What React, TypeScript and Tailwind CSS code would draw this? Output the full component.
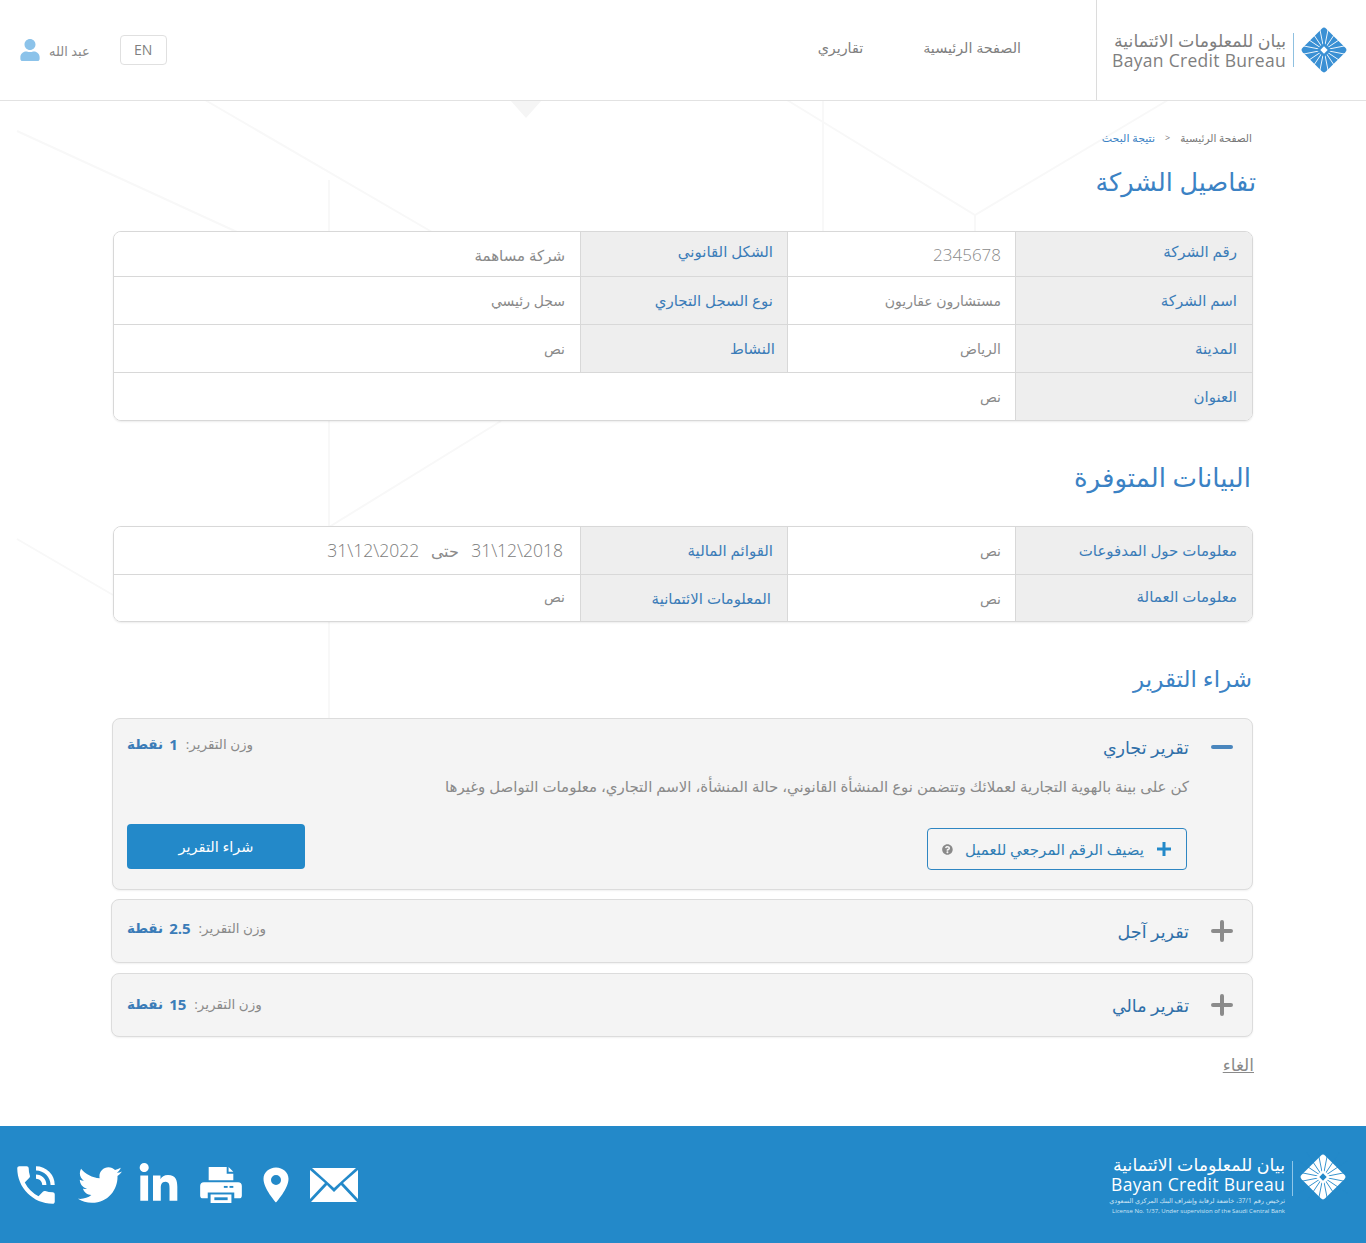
import React from "react";
import { MdPhoneInTalk } from "react-icons/md";
import { FaTwitter, FaLinkedinIn, FaUser, FaQuestionCircle } from "react-icons/fa";
import { IoLocationSharp } from "react-icons/io5";

const AR = "font-['Open_Sans','DejaVu_Sans',sans-serif]";

const LogoMark = ({ bg, ink, className }: { bg: string; ink: string; className?: string }) => {
  const rays = Array.from({ length: 16 }, (_, i) => i * 22.5 + 11.25);
  return (
    <svg width="50" height="50" viewBox="0 0 48 48" className={className}>
      <rect x="8" y="8" width="32" height="32" rx="3" fill={bg} transform="rotate(45 24 24)" />
      {rays.map((a) => (
        <line key={a} x1="24" y1="24" x2="24" y2="-4" stroke={ink} strokeWidth="0.8" transform={`rotate(${a} 24 24)`} />
      ))}
      <rect x="19" y="19" width="10" height="10" fill={bg} transform="rotate(45 24 24)" />
      <rect x="21.5" y="21.5" width="5" height="5" fill={ink} transform="rotate(45 24 24)" />
    </svg>
  );
};

const Row = ({ children, h, last }: { children: React.ReactNode; h: string; last?: boolean }) => (
  <div className={`flex ${h} ${last ? "" : "border-b border-[#d8d8d8]"}`}>{children}</div>
);

const Label = ({ text, w, className }: { text: string; w: string; className?: string }) => (
  <div className={`${w} flex shrink-0 items-center border-l border-[#d8d8d8] bg-[#eeeeee] text-[15px] text-[#3b7cb8] ${className ?? ""}`}>{text}</div>
);

const Value = ({ text, w, className }: { text: string; w: string; className?: string }) => (
  <div className={`${w} flex items-center border-l border-[#d8d8d8] bg-white text-[14px] text-[#8a8a8a] last:border-l-0 ${className ?? "pr-3.5"}`}>{text}</div>
);

const Heading = ({ text, className }: { text: string; className: string }) => (
  <h2 className={`leading-[36px] text-[#3b82c4] ${className}`}>{text}</h2>
);

const Weight = ({ value }: { value: string }) => (
  <div className="flex items-center gap-2 text-[13.5px]">
    <span className="text-[#8a8a8a]">وزن التقرير:</span>
    <span className="flex items-center gap-1.5 font-bold text-[#3b7cb8]">
      <span className="text-[15px]">{value}</span>
      <span>نقطة</span>
    </span>
  </div>
);

const Collapsed = ({ title, value, className, weightClass }: { title: string; value: string; className: string; weightClass: string }) => (
  <div className={`flex h-16 items-center justify-between rounded-lg border border-[#dcdcdc] bg-[#f4f4f4] pl-[15px] pr-[19px] shadow-[0_1px_2px_rgba(0,0,0,0.06)] ${className}`}>
    <div className="flex items-center gap-[22px]">
      <svg width="22" height="22" viewBox="0 0 22 22" className="shrink-0">
        <path d="M11 2v18M2 11h18" stroke="#8b8b8b" strokeWidth="4" strokeLinecap="round" />
      </svg>
      <span className="text-[17.5px] text-[#2f6fa8]">{title}</span>
    </div>
    <div className={weightClass}>
      <Weight value={value} />
    </div>
  </div>
);

export default function App() {
  return (
    <div dir="rtl" className={`relative min-h-[1243px] overflow-hidden bg-white ${AR}`}>
      {/* faint hexagon pattern behind the page */}
      <svg className="absolute left-0 top-0" width="1366" height="1243" fill="none" stroke="#f8f8f8" strokeWidth="2">
        <path d="M17 131L237 232M205 100L432 232M329 180V232M787 100L975 215L1168 100M823 100V232M975 215V232M329 421V526M321 532L501 421M17 539L113 595M329 622V718" />
        <path d="M510 100L526 118L542 100" fill="#f5f5f5" stroke="none" />
      </svg>

      <header className="relative flex h-[101px] items-center border-b border-[#e2e2e2] bg-white">
        <div className="flex h-full w-[270px] shrink-0 items-center border-l border-[#dcdcdc] pr-[17px]">
          <LogoMark bg="#3a90d4" ink="#fff" />
          <div className="mr-[5px] h-[34px] w-px bg-[#8fc0e0]" />
          <div className="mr-[7px] flex flex-col items-start text-[#7f7f7f]">
            <span className="whitespace-nowrap text-[17.4px] leading-[20px]">بيان للمعلومات الائتمانية</span>
            <span dir="ltr" className="whitespace-nowrap text-[17.5px] leading-[20px] tracking-[0.3px]">Bayan Credit Bureau</span>
          </div>
        </div>
        <nav className="mr-[75px] flex gap-[60px] pb-1 text-[14.3px] text-[#808080]">
          <span>الصفحة الرئيسية</span>
          <span>تقاريري</span>
        </nav>
        <div className="mr-auto flex items-center gap-[30px] pl-[19px]">
          <span className="flex h-[30px] w-[47px] items-center justify-center rounded border border-[#e0e0e0] pb-0.5 text-[14px] text-[#808080]">EN</span>
          <span className="flex items-center gap-2 text-[13px] text-[#8a8a8a]">
            <span className="mt-[3px]">عبد الله</span>
            <FaUser className="text-[#8cc3ea]" size={22} />
          </span>
        </div>
      </header>

      <main className="relative mx-auto w-[1140px] pt-[29px]">
        <div className="flex items-center pr-px text-[11px] leading-4">
          <span className="text-[10.5px] text-[#777]">الصفحة الرئيسية</span>
          <span className="mx-[10px] text-[9px] text-[#777]">&lt;</span>
          <span className="text-[#3b82c4]">نتيجة البحث</span>
        </div>
        <Heading text="تفاصيل الشركة" className="mt-[17px] -mr-[3px] text-[25.5px]" />

        <div className="mt-[32px] overflow-hidden rounded-lg border border-[#d8d8d8] shadow-[0_1px_2px_rgba(0,0,0,0.08)]">
          <Row h="h-[45px]">
            <Label text="رقم الشركة" w="w-[237px]" className="pb-1.5 pr-[15px]" />
            <Value text="2345678" w="w-[228px]" className="pr-3.5 pt-0.5 text-[17px] font-light text-[#7c7c7c]" />
            <Label text="الشكل القانوني" w="w-[207px]" className="pb-1.5 pr-3.5" />
            <Value text="شركة مساهمة" w="flex-1" className="pr-[15px] pt-0.5 text-[15px]" />
          </Row>
          <Row h="h-[48px]">
            <Label text="اسم الشركة" w="w-[237px]" className="pr-[15px]" />
            <Value text="مستشارون عقاريون" w="w-[228px]" />
            <Label text="نوع السجل التجاري" w="w-[207px]" className="pr-3.5 text-[14.5px]" />
            <Value text="سجل رئيسي" w="flex-1" className="pr-[15px]" />
          </Row>
          <Row h="h-[48px]">
            <Label text="المدينة" w="w-[237px]" className="pr-[15px]" />
            <Value text="الرياض" w="w-[228px]" />
            <Label text="النشاط" w="w-[207px]" className="pr-3" />
            <Value text="نص" w="flex-1" className="pr-[15px]" />
          </Row>
          <Row h="h-[47px]" last>
            <Label text="العنوان" w="w-[237px]" className="pr-[15px]" />
            <Value text="نص" w="flex-1" />
          </Row>
        </div>

        <Heading text="البيانات المتوفرة" className="mt-[38px] pr-0.5 text-[26px]" />

        <div className="mt-[31px] overflow-hidden rounded-lg border border-[#d8d8d8] shadow-[0_1px_2px_rgba(0,0,0,0.08)]">
          <Row h="h-[48px]">
            <Label text="معلومات حول المدفوعات" w="w-[237px]" className="pr-[15px] text-[15.5px]" />
            <Value text="نص" w="w-[228px]" />
            <Label text="القوائم المالية" w="w-[207px]" className="pr-3.5 text-[15.5px]" />
            <div className="flex flex-1 items-center gap-3 bg-white pr-[17px] text-[17.5px] font-light text-[#7c7c7c]">
              <span dir="ltr">31\12\2018</span>
              <span className="text-[16px] text-[#8a8a8a]">حتى</span>
              <span dir="ltr">31\12\2022</span>
            </div>
          </Row>
          <Row h="h-[46px]" last>
            <Label text="معلومات العمالة" w="w-[237px]" className="pb-1 pr-[15px] text-[15.5px]" />
            <Value text="نص" w="w-[228px]" />
            <Label text="المعلومات الائتمانية" w="w-[207px]" className="pr-4 text-[15.5px]" />
            <Value text="نص" w="flex-1" className="pb-1 pr-[15px]" />
          </Row>
        </div>

        <Heading text="شراء التقرير" className="mt-[38px] pr-px text-[23px]" />

        <section className="mt-[22px] -ml-px h-[172px] rounded-lg border border-[#dcdcdc] bg-[#f4f4f4] pl-[14px] pr-[19px] pt-[14px] shadow-[0_1px_2px_rgba(0,0,0,0.06)]">
          <div className="flex items-start justify-between">
            <div className="flex items-center gap-[22px]">
              <span className="h-1 w-[22px] rounded-full bg-[#4a86bd]" />
              <span className="text-[17.5px] leading-[28px] text-[#2f6fa8]">تقرير تجاري</span>
            </div>
            <Weight value="1" />
          </div>
          <p className="mr-[44px] mt-[15px] whitespace-nowrap text-[15px] leading-5 text-[#8a8a8a]">
            كن على بينة بالهوية التجارية لعملائك وتتضمن نوع المنشأة القانوني، حالة المنشأة، الاسم التجاري، معلومات التواصل وغيرها
          </p>
          <div className="mr-[46px] mt-[28px] flex items-start justify-between">
            <button className="mt-1 flex h-[42px] w-[260px] items-center gap-3 rounded border border-[#2f86c2] pr-[14px] text-[15px] text-[#2f7db5]">
              <svg width="16" height="16" viewBox="0 0 16 16" className="shrink-0">
                <path d="M8 1v14M1 8h14" stroke="#2389c9" strokeWidth="3" />
              </svg>
              <span className="whitespace-nowrap">يضيف الرقم المرجعي للعميل</span>
              <FaQuestionCircle className="ml-[14px] mr-auto text-[#8a8a8a]" size={15} />
            </button>
            <button className="h-[45px] w-[178px] rounded bg-[#2389c9] text-[14.5px] text-white">شراء التقرير</button>
          </div>
        </section>

        <Collapsed title="تقرير آجل" value="2.5" className="mt-[9px] -ml-0.5" weightClass="-mt-1.5" />
        <Collapsed title="تقرير مالي" value="15" className="mt-[10px] -ml-0.5" weightClass="-mt-0.5" />

        <div className="-mr-px mt-[18px] text-[17px] leading-5 text-[#8a8a8a] underline">الغاء</div>
      </main>

      <footer className="absolute bottom-0 left-0 right-0 flex h-[117px] items-center justify-between bg-[#2389c9] pl-[11px] pr-[18px] text-white">
        <div className="flex items-start">
          <LogoMark bg="#fff" ink="#2389c9" className="-mt-[2px]" />
          <div className="mr-[5px] mt-[7px] h-[35px] w-px bg-[#8fc6e8]" />
          <div className="mr-[7px] flex flex-col items-start">
            <span className="whitespace-nowrap text-[17.4px] leading-[20px]">بيان للمعلومات الائتمانية</span>
            <span dir="ltr" className="whitespace-nowrap text-[17.5px] leading-[20px] tracking-[0.3px]">Bayan Credit Bureau</span>
            <span className="mt-[2px] whitespace-nowrap text-[6.5px] leading-[10px] text-[#cfe6f5]">ترخيص رقم 37/1، خاضعة لرقابة وإشراف البنك المركزي السعودي</span>
            <span dir="ltr" className="whitespace-nowrap text-[6px] leading-[10px] text-[#cfe6f5]">License No. 1/37, Under supervision of the Saudi Central Bank</span>
          </div>
        </div>
        <div dir="ltr" className="flex items-center">
          <MdPhoneInTalk size={50} />
          <FaTwitter size={44} className="ml-[17px]" />
          <FaLinkedinIn size={43} className="ml-[15px]" />
          <svg width="42" height="36" viewBox="0 0 44 38" fill="#fff" className="ml-[20px]">
            <path d="M9 0h19v7h7v7H9zM30 0l5 5h-5z" />
            <path d="M4 16h36a4 4 0 0 1 4 4v10a3 3 0 0 1-3 3h-5v-6H8v6H3a3 3 0 0 1-3-3V20a4 4 0 0 1 4-4z" />
            <path d="M11 29h22v9H11z" />
            <rect x="15" y="32" width="14" height="3" fill="#2389c9" />
            <rect x="25" y="20" width="4" height="2" fill="#2389c9" />
            <rect x="31" y="20" width="4" height="2" fill="#2389c9" />
          </svg>
          <IoLocationSharp size={40} className="ml-[14px]" />
          <svg width="48" height="34" viewBox="0 0 48 34" fill="#fff" className="ml-[14px]">
            <path d="M2 0h44L24 20z" />
            <path d="M0 2v29l15-16zM48 2v29L33 15z" />
            <path d="M1 34h46L31 17l-7 7-7-7z" />
          </svg>
        </div>
      </footer>
    </div>
  );
}
